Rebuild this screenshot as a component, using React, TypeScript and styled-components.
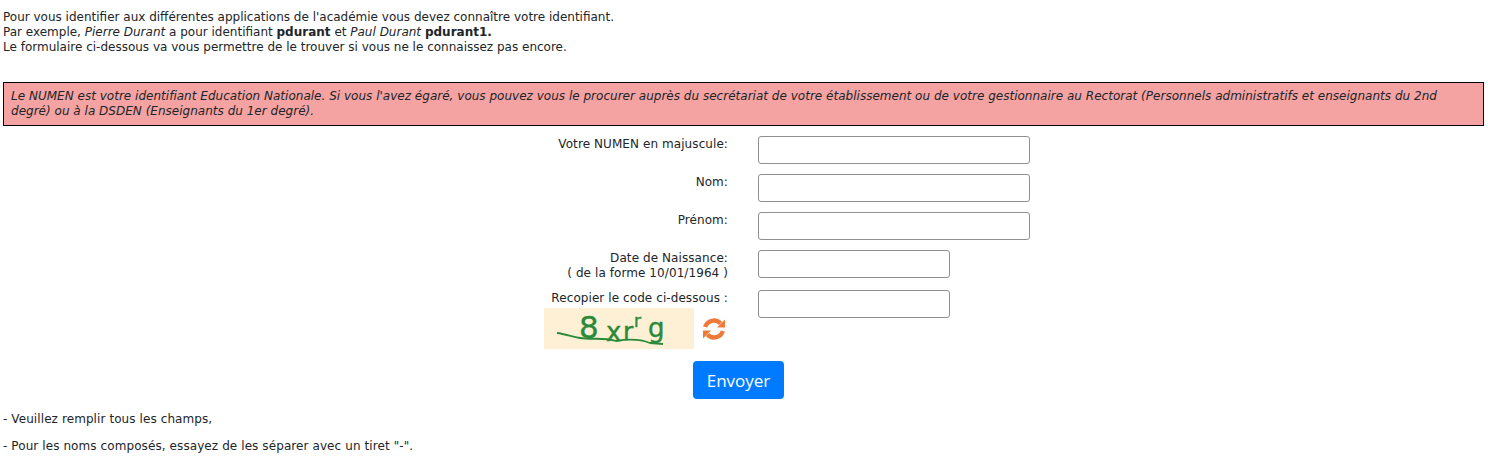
import React from 'react';
import styled, { createGlobalStyle } from 'styled-components';

const GlobalStyle = createGlobalStyle`
  body { margin: 0; background: #fff; color: #212529; font-family: 'DejaVu Sans', Verdana, sans-serif; font-size: 12px; line-height: 15px; }
`;

const Page = styled.div`
  padding: 10px 4px 0 3px;
`;

const Intro = styled.p`
  margin: 0 0 27px;
`;

const Alert = styled.div`
  border: 1px solid #000;
  background: #f4a2a2;
  padding: 6px 7px;
  font-style: italic;
  letter-spacing: 0.015px;
  margin-bottom: 10px;
`;

const FormGrid = styled.form`
  display: grid;
  grid-template-columns: 725px 1fr;
  column-gap: 30px;
`;

const Label = styled.label<{ $gap: number }>`
  text-align: right;
  padding-top: 1px;
  letter-spacing: 0.08px;
  margin-bottom: ${(p) => p.$gap}px;
`;

const Field = styled.input<{ $w: number; $gap: number }>`
  display: block;
  box-sizing: border-box;
  width: ${(p) => p.$w}px;
  height: 28px;
  border: 1px solid #8f8f8f;
  border-radius: 3px;
  background: #fff;
  margin-bottom: ${(p) => p.$gap}px;
`;

const CaptchaRow = styled.div`
  display: flex;
  align-items: center;
  gap: 8px;
  padding-left: 541px;
  margin-top: -10px;
`;

const ButtonRow = styled.div`
  padding-left: 690px;
  margin-top: 12px;
`;

const SendButton = styled.button`
  width: 91px;
  height: 38px;
  border: none;
  border-radius: 4px;
  background: #007bff;
  color: #fff;
  font-family: 'Open Sans', sans-serif;
  font-size: 17px;
  padding: 0;
`;

const Notes = styled.div`
  margin-top: 13px;
  letter-spacing: 0.09px;
`;

const Note = styled.p`
  margin: 0 0 12px;
`;

const Captcha = () => (
  <svg width="150" height="41" viewBox="0 0 150 41" style={{ display: 'block' }}>
    <rect width="150" height="41" fill="#fdf0d5" />
    <g fill="#2a8a3a" stroke="#2a8a3a" strokeWidth="0.4" fontFamily="'DejaVu Sans', sans-serif">
      <text x="35" y="30" fontSize="31">8</text>
      <text x="62" y="33" fontSize="26">x</text>
      <text x="79" y="32" fontSize="25">r</text>
      <text x="90" y="19" fontSize="17">r</text>
      <text x="104" y="29" fontSize="26">g</text>
    </g>
    <path
      d="M13 25 C22 26 28 29 36 30 C48 32 60 29 72 33 C84 31 96 31 106 35 L119 36"
      fill="none"
      stroke="#2a8a3a"
      strokeWidth="1.8"
    />
  </svg>
);

const RefreshIcon = () => (
  <svg width="24" height="24" viewBox="0 0 24 24" style={{ display: 'block' }}>
    <g fill="none" stroke="#ee7a3a" strokeWidth="4.4">
      <path d="M3.2 10 A9 9 0 0 1 18.5 6.5" />
      <path d="M20.8 14 A9 9 0 0 1 5.5 17.5" />
    </g>
    <path d="M23 2.5 V10.5 H15 Z M1 21.5 V13.5 H9 Z" fill="#ee7a3a" />
  </svg>
);

export default function App() {
  return (
    <Page>
      <GlobalStyle />
      <Intro>
        Pour vous identifier aux différentes applications de l'académie vous devez connaître votre identifiant.
        <br />
        Par exemple, <i>Pierre Durant</i> a pour identifiant <b>pdurant</b> et <i>Paul Durant</i> <b>pdurant1.</b>
        <br />
        Le formulaire ci-dessous va vous permettre de le trouver si vous ne le connaissez pas encore.
      </Intro>
      <Alert>
        Le NUMEN est votre identifiant Education Nationale. Si vous l'avez égaré, vous pouvez vous le procurer auprès du secrétariat de votre établissement ou de votre gestionnaire au Rectorat (Personnels administratifs et enseignants du 2nd degré) ou à la DSDEN (Enseignants du 1er degré).
      </Alert>
      <FormGrid>
        <Label $gap={10}>Votre NUMEN en majuscule:</Label>
        <Field $w={272} $gap={10} />
        <Label $gap={10}>Nom:</Label>
        <Field $w={272} $gap={10} />
        <Label $gap={10}>Prénom:</Label>
        <Field $w={272} $gap={10} />
        <Label $gap={9}>
          Date de Naissance:
          <br />( de la forme 10/01/1964 )
        </Label>
        <Field $w={192} $gap={12} />
        <Label $gap={0}>Recopier le code ci-dessous :</Label>
        <Field $w={192} $gap={0} />
      </FormGrid>
      <CaptchaRow>
        <Captcha />
        <RefreshIcon />
      </CaptchaRow>
      <ButtonRow>
        <SendButton type="button">Envoyer</SendButton>
      </ButtonRow>
      <Notes>
        <Note>- Veuillez remplir tous les champs,</Note>
        <Note>- Pour les noms composés, essayez de les séparer avec un tiret "-".</Note>
      </Notes>
    </Page>
  );
}
